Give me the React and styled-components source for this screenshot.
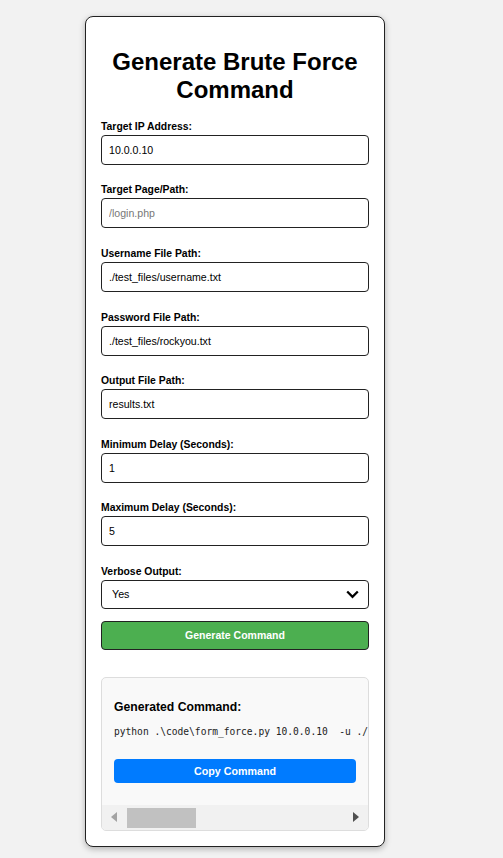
import React, { useState } from 'react';
import styled, { createGlobalStyle } from 'styled-components';

const GlobalStyle = createGlobalStyle`
  html, body {
    margin: 0;
    background: #f2f2f2;
  }
  body {
    font-family: "Liberation Sans", Arial, sans-serif;
    color: #000;
  }
`;

const Page = styled.div`
  padding: 16px 0 12px 85px;
`;

const Card = styled.div`
  box-sizing: border-box;
  width: 300px;
  background: #fff;
  border: 1px solid #222;
  border-radius: 8px;
  box-shadow: 0 2px 6px rgba(0, 0, 0, 0.28);
  padding: 31px 15px 15px;
`;

const Title = styled.h2`
  margin: 0 0 17.6px;
  font-size: 24px;
  font-weight: bold;
  text-align: center;
  line-height: 27.6px;
`;

const Field = styled.div`
  margin-bottom: ${(p) => (p.$last ? '0' : '19.6px')};
`;

const Label = styled.label`
  display: block;
  font-size: 10.4px;
  font-weight: bold;
  line-height: 12px;
  margin-bottom: 2px;
`;

const Input = styled.input`
  box-sizing: border-box;
  display: block;
  width: 100%;
  height: 30px;
  padding: 0 7px;
  border: 1px solid #222;
  border-radius: 4px;
  font-family: "Liberation Sans", Arial, sans-serif;
  font-size: 10.6px;
  color: #000;
  background: #fff;
  outline: none;
  &::placeholder {
    color: #777;
  }
`;

const SelectWrap = styled.div`
  position: relative;
`;

const Select = styled.select`
  box-sizing: border-box;
  display: block;
  width: 100%;
  height: 29px;
  padding: 0 10px;
  border: 1px solid #222;
  border-radius: 4px;
  font-family: "Liberation Sans", Arial, sans-serif;
  font-size: 10.7px;
  color: #000;
  background: #fff;
  appearance: none;
  outline: none;
`;

const Chevron = styled.svg`
  position: absolute;
  right: 10px;
  top: 10px;
  pointer-events: none;
`;

const GenerateButton = styled.button`
  box-sizing: border-box;
  display: block;
  width: 100%;
  height: 29px;
  margin-top: 12px;
  border: 1px solid #222;
  border-radius: 4px;
  background: #4caf50;
  color: #fff;
  font-family: "Liberation Sans", Arial, sans-serif;
  font-size: 10.5px;
  font-weight: bold;
  cursor: pointer;
`;

const ResultBox = styled.div`
  margin-top: 27px;
  background: #f9f9f9;
  border: 1px solid #ddd;
  border-radius: 5px;
  overflow: hidden;
`;

const ResultContent = styled.div`
  padding: 12px 12px 22px;
`;

const ResultTitle = styled.h3`
  margin: 10px 0 12px;
  font-size: 12.2px;
  font-weight: bold;
  line-height: 14px;
`;

const Code = styled.pre`
  margin: 0 -12px 0 0;
  overflow: hidden;
  font-family: "DejaVu Sans Mono", "Liberation Mono", monospace;
  font-size: 9.6px;
  line-height: 12px;
  color: #222;
  white-space: pre;
`;

const CopyButton = styled.button`
  display: block;
  width: 100%;
  height: 24px;
  margin-top: 21px;
  border: none;
  border-radius: 4px;
  background: #007bff;
  color: #fff;
  font-family: "Liberation Sans", Arial, sans-serif;
  font-size: 10.7px;
  font-weight: bold;
  cursor: pointer;
`;

const ScrollBar = styled.div`
  display: flex;
  align-items: stretch;
  height: 25px;
  background: #f1f1f1;
`;

const ScrollArrow = styled.div`
  flex: 0 0 24px;
  display: flex;
  align-items: center;
  justify-content: center;
`;

const ScrollTrack = styled.div`
  flex: 1;
  display: flex;
  align-items: stretch;
  padding: 3px 0 2px 1px;
`;

const ScrollThumb = styled.div`
  width: 69px;
  background: #c1c1c1;
`;

const fields = [
  { label: 'Target IP Address:', value: '10.0.0.10' },
  { label: 'Target Page/Path:', value: '', placeholder: '/login.php' },
  { label: 'Username File Path:', value: './test_files/username.txt' },
  { label: 'Password File Path:', value: './test_files/rockyou.txt' },
  { label: 'Output File Path:', value: 'results.txt' },
  { label: 'Minimum Delay (Seconds):', value: '1' },
  { label: 'Maximum Delay (Seconds):', value: '5' },
];

const command =
  'python .\\code\\form_force.py 10.0.0.10  -u ./test_files/username.txt -p ./test_files/rockyou.txt -o results.txt --min-delay 1 --max-delay 5 -v';

export default function App() {
  const [values, setValues] = useState(fields.map((f) => f.value));
  const [verbose, setVerbose] = useState('yes');

  return (
    <Page>
      <GlobalStyle />
      <Card>
        <Title>Generate Brute Force Command</Title>
        {fields.map((f, i) => (
          <Field key={f.label}>
            <Label>{f.label}</Label>
            <Input
              value={values[i]}
              placeholder={f.placeholder}
              onChange={(e) => {
                const next = [...values];
                next[i] = e.target.value;
                setValues(next);
              }}
            />
          </Field>
        ))}
        <Field $last>
          <Label>Verbose Output:</Label>
          <SelectWrap>
            <Select value={verbose} onChange={(e) => setVerbose(e.target.value)}>
              <option value="yes">Yes</option>
              <option value="no">No</option>
            </Select>
            <Chevron width="13" height="9" viewBox="0 0 13 9">
              <path d="M1.2 1.5 L6.5 6.8 L11.8 1.5" fill="none" stroke="#000" strokeWidth="2.3" />
            </Chevron>
          </SelectWrap>
        </Field>
        <GenerateButton>Generate Command</GenerateButton>
        <ResultBox>
          <ResultContent>
            <ResultTitle>Generated Command:</ResultTitle>
            <Code>{command}</Code>
            <CopyButton>Copy Command</CopyButton>
          </ResultContent>
          <ScrollBar>
            <ScrollArrow>
              <svg width="6" height="10" viewBox="0 0 6 10">
                <path d="M6 0 L0 5 L6 10 Z" fill="#a3a3a3" />
              </svg>
            </ScrollArrow>
            <ScrollTrack>
              <ScrollThumb />
            </ScrollTrack>
            <ScrollArrow>
              <svg width="6" height="10" viewBox="0 0 6 10">
                <path d="M0 0 L6 5 L0 10 Z" fill="#505050" />
              </svg>
            </ScrollArrow>
          </ScrollBar>
        </ResultBox>
      </Card>
    </Page>
  );
}
